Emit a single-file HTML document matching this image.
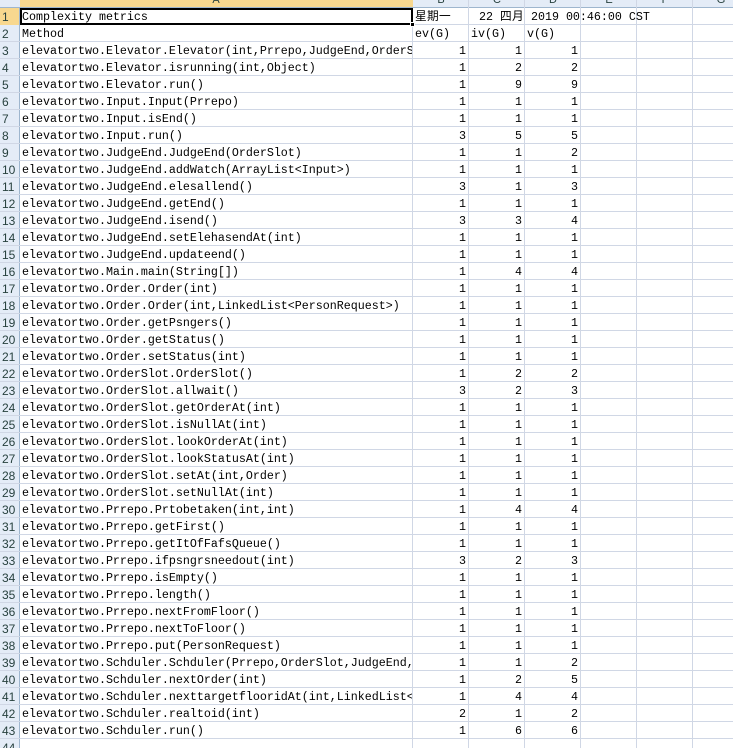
<!DOCTYPE html>
<html><head><meta charset="utf-8"><style>
*{margin:0;padding:0;box-sizing:border-box}
html,body{width:733px;height:748px;overflow:hidden}
body{background:#fff;position:relative;font-family:"Liberation Mono","Noto Sans CJK SC",monospace;font-size:11.67px;color:#000}
.h{position:absolute;left:0;width:733px;height:1px;background:#d0d7e5}
.v{position:absolute;top:0;width:1px;height:748px;background:#d0d7e5}
.rh{position:absolute;left:0;top:0;width:20px;height:748px;background:#e4ecf7;border-right:1px solid #9eb6ce}
.ch{position:absolute;left:0;top:0;width:733px;height:8px;background:#e4ecf7;border-bottom:1px solid #9eb6ce;overflow:hidden}
.cl{position:absolute;top:-6px;font-size:11px;color:#27413e;width:56px;text-align:center;font-family:"Liberation Sans",sans-serif}
.n{position:absolute;left:0;width:20px;height:17px;line-height:18px;padding-left:2px;color:#27413e;font-family:"Liberation Sans",sans-serif;font-size:12px}
.r{position:absolute;left:0;height:17px;line-height:18px;width:733px}
.a{position:absolute;left:22px;width:390px;overflow:hidden;white-space:nowrap}
.b,.c,.d{position:absolute;width:53px;text-align:right}
.b{left:413px}.c{left:469px}.d{left:525px}
.k{display:inline-block;width:12px;text-align:left}
</style></head><body>
<div class="rh"></div>
<div class="ch">
<div style="position:absolute;left:20px;top:0;width:393px;height:8px;background:#f8d88f"></div>
<div class="cl" style="left:188px">A</div>
<div class="cl" style="left:413px">B</div>
<div class="cl" style="left:469px">C</div>
<div class="cl" style="left:525px">D</div>
<div class="cl" style="left:581px">E</div>
<div class="cl" style="left:637px">F</div>
<div class="cl" style="left:693px">G</div>
</div>
<div class="v" style="left:412px;top:8px"></div>
<div class="v" style="left:468px"></div>
<div class="v" style="left:524px"></div>
<div class="v" style="left:580px"></div>
<div class="v" style="left:636px"></div>
<div class="v" style="left:692px"></div>
<div class="h" style="top:24px"></div><div class="h" style="top:41px"></div><div class="h" style="top:58px"></div><div class="h" style="top:75px"></div><div class="h" style="top:92px"></div><div class="h" style="top:109px"></div><div class="h" style="top:126px"></div><div class="h" style="top:143px"></div><div class="h" style="top:160px"></div><div class="h" style="top:177px"></div><div class="h" style="top:194px"></div><div class="h" style="top:211px"></div><div class="h" style="top:228px"></div><div class="h" style="top:245px"></div><div class="h" style="top:262px"></div><div class="h" style="top:279px"></div><div class="h" style="top:296px"></div><div class="h" style="top:313px"></div><div class="h" style="top:330px"></div><div class="h" style="top:347px"></div><div class="h" style="top:364px"></div><div class="h" style="top:381px"></div><div class="h" style="top:398px"></div><div class="h" style="top:415px"></div><div class="h" style="top:432px"></div><div class="h" style="top:449px"></div><div class="h" style="top:466px"></div><div class="h" style="top:483px"></div><div class="h" style="top:500px"></div><div class="h" style="top:517px"></div><div class="h" style="top:534px"></div><div class="h" style="top:551px"></div><div class="h" style="top:568px"></div><div class="h" style="top:585px"></div><div class="h" style="top:602px"></div><div class="h" style="top:619px"></div><div class="h" style="top:636px"></div><div class="h" style="top:653px"></div><div class="h" style="top:670px"></div><div class="h" style="top:687px"></div><div class="h" style="top:704px"></div><div class="h" style="top:721px"></div><div class="h" style="top:738px"></div>
<div style="position:absolute;left:20px;top:8px;width:393px;height:17px;border:2px solid #000"></div>
<div style="position:absolute;left:410px;top:22px;width:5px;height:5px;background:#000;border:1px solid #fff"></div>
<div style="position:absolute;left:0;top:8px;width:20px;height:17px;background:#f8d88f;border-right:1px solid #9eb6ce"></div>
<div class="n" style="top:8px">1</div><div class="n" style="top:25px">2</div><div class="n" style="top:42px">3</div><div class="n" style="top:59px">4</div><div class="n" style="top:76px">5</div><div class="n" style="top:93px">6</div><div class="n" style="top:110px">7</div><div class="n" style="top:127px">8</div><div class="n" style="top:144px">9</div><div class="n" style="top:161px">10</div><div class="n" style="top:178px">11</div><div class="n" style="top:195px">12</div><div class="n" style="top:212px">13</div><div class="n" style="top:229px">14</div><div class="n" style="top:246px">15</div><div class="n" style="top:263px">16</div><div class="n" style="top:280px">17</div><div class="n" style="top:297px">18</div><div class="n" style="top:314px">19</div><div class="n" style="top:331px">20</div><div class="n" style="top:348px">21</div><div class="n" style="top:365px">22</div><div class="n" style="top:382px">23</div><div class="n" style="top:399px">24</div><div class="n" style="top:416px">25</div><div class="n" style="top:433px">26</div><div class="n" style="top:450px">27</div><div class="n" style="top:467px">28</div><div class="n" style="top:484px">29</div><div class="n" style="top:501px">30</div><div class="n" style="top:518px">31</div><div class="n" style="top:535px">32</div><div class="n" style="top:552px">33</div><div class="n" style="top:569px">34</div><div class="n" style="top:586px">35</div><div class="n" style="top:603px">36</div><div class="n" style="top:620px">37</div><div class="n" style="top:637px">38</div><div class="n" style="top:654px">39</div><div class="n" style="top:671px">40</div><div class="n" style="top:688px">41</div><div class="n" style="top:705px">42</div><div class="n" style="top:722px">43</div><div class="n" style="top:739px">44</div>

<div class="r" style="top:8px"><span class="a">Complexity metrics</span><span style="position:absolute;left:415px;white-space:nowrap"><span class="k">星</span><span class="k">期</span><span class="k">一</span>&nbsp;&nbsp;&nbsp;&nbsp;22 <span class="k">四</span><span class="k">月</span> 2019 00:46:00 CST</span></div>
<div class="r" style="top:25px"><span class="a">Method</span><span style="position:absolute;left:415px">ev(G)</span><span style="position:absolute;left:471px">iv(G)</span><span style="position:absolute;left:527px">v(G)</span></div>
<div class="r" style="top:42px"><span class="a">elevatortwo.Elevator.Elevator(int,Prrepo,JudgeEnd,OrderSlot)</span><span class="b">1</span><span class="c">1</span><span class="d">1</span></div>
<div class="r" style="top:59px"><span class="a">elevatortwo.Elevator.isrunning(int,Object)</span><span class="b">1</span><span class="c">2</span><span class="d">2</span></div>
<div class="r" style="top:76px"><span class="a">elevatortwo.Elevator.run()</span><span class="b">1</span><span class="c">9</span><span class="d">9</span></div>
<div class="r" style="top:93px"><span class="a">elevatortwo.Input.Input(Prrepo)</span><span class="b">1</span><span class="c">1</span><span class="d">1</span></div>
<div class="r" style="top:110px"><span class="a">elevatortwo.Input.isEnd()</span><span class="b">1</span><span class="c">1</span><span class="d">1</span></div>
<div class="r" style="top:127px"><span class="a">elevatortwo.Input.run()</span><span class="b">3</span><span class="c">5</span><span class="d">5</span></div>
<div class="r" style="top:144px"><span class="a">elevatortwo.JudgeEnd.JudgeEnd(OrderSlot)</span><span class="b">1</span><span class="c">1</span><span class="d">2</span></div>
<div class="r" style="top:161px"><span class="a">elevatortwo.JudgeEnd.addWatch(ArrayList&lt;Input&gt;)</span><span class="b">1</span><span class="c">1</span><span class="d">1</span></div>
<div class="r" style="top:178px"><span class="a">elevatortwo.JudgeEnd.elesallend()</span><span class="b">3</span><span class="c">1</span><span class="d">3</span></div>
<div class="r" style="top:195px"><span class="a">elevatortwo.JudgeEnd.getEnd()</span><span class="b">1</span><span class="c">1</span><span class="d">1</span></div>
<div class="r" style="top:212px"><span class="a">elevatortwo.JudgeEnd.isend()</span><span class="b">3</span><span class="c">3</span><span class="d">4</span></div>
<div class="r" style="top:229px"><span class="a">elevatortwo.JudgeEnd.setElehasendAt(int)</span><span class="b">1</span><span class="c">1</span><span class="d">1</span></div>
<div class="r" style="top:246px"><span class="a">elevatortwo.JudgeEnd.updateend()</span><span class="b">1</span><span class="c">1</span><span class="d">1</span></div>
<div class="r" style="top:263px"><span class="a">elevatortwo.Main.main(String[])</span><span class="b">1</span><span class="c">4</span><span class="d">4</span></div>
<div class="r" style="top:280px"><span class="a">elevatortwo.Order.Order(int)</span><span class="b">1</span><span class="c">1</span><span class="d">1</span></div>
<div class="r" style="top:297px"><span class="a">elevatortwo.Order.Order(int,LinkedList&lt;PersonRequest&gt;)</span><span class="b">1</span><span class="c">1</span><span class="d">1</span></div>
<div class="r" style="top:314px"><span class="a">elevatortwo.Order.getPsngers()</span><span class="b">1</span><span class="c">1</span><span class="d">1</span></div>
<div class="r" style="top:331px"><span class="a">elevatortwo.Order.getStatus()</span><span class="b">1</span><span class="c">1</span><span class="d">1</span></div>
<div class="r" style="top:348px"><span class="a">elevatortwo.Order.setStatus(int)</span><span class="b">1</span><span class="c">1</span><span class="d">1</span></div>
<div class="r" style="top:365px"><span class="a">elevatortwo.OrderSlot.OrderSlot()</span><span class="b">1</span><span class="c">2</span><span class="d">2</span></div>
<div class="r" style="top:382px"><span class="a">elevatortwo.OrderSlot.allwait()</span><span class="b">3</span><span class="c">2</span><span class="d">3</span></div>
<div class="r" style="top:399px"><span class="a">elevatortwo.OrderSlot.getOrderAt(int)</span><span class="b">1</span><span class="c">1</span><span class="d">1</span></div>
<div class="r" style="top:416px"><span class="a">elevatortwo.OrderSlot.isNullAt(int)</span><span class="b">1</span><span class="c">1</span><span class="d">1</span></div>
<div class="r" style="top:433px"><span class="a">elevatortwo.OrderSlot.lookOrderAt(int)</span><span class="b">1</span><span class="c">1</span><span class="d">1</span></div>
<div class="r" style="top:450px"><span class="a">elevatortwo.OrderSlot.lookStatusAt(int)</span><span class="b">1</span><span class="c">1</span><span class="d">1</span></div>
<div class="r" style="top:467px"><span class="a">elevatortwo.OrderSlot.setAt(int,Order)</span><span class="b">1</span><span class="c">1</span><span class="d">1</span></div>
<div class="r" style="top:484px"><span class="a">elevatortwo.OrderSlot.setNullAt(int)</span><span class="b">1</span><span class="c">1</span><span class="d">1</span></div>
<div class="r" style="top:501px"><span class="a">elevatortwo.Prrepo.Prtobetaken(int,int)</span><span class="b">1</span><span class="c">4</span><span class="d">4</span></div>
<div class="r" style="top:518px"><span class="a">elevatortwo.Prrepo.getFirst()</span><span class="b">1</span><span class="c">1</span><span class="d">1</span></div>
<div class="r" style="top:535px"><span class="a">elevatortwo.Prrepo.getItOfFafsQueue()</span><span class="b">1</span><span class="c">1</span><span class="d">1</span></div>
<div class="r" style="top:552px"><span class="a">elevatortwo.Prrepo.ifpsngrsneedout(int)</span><span class="b">3</span><span class="c">2</span><span class="d">3</span></div>
<div class="r" style="top:569px"><span class="a">elevatortwo.Prrepo.isEmpty()</span><span class="b">1</span><span class="c">1</span><span class="d">1</span></div>
<div class="r" style="top:586px"><span class="a">elevatortwo.Prrepo.length()</span><span class="b">1</span><span class="c">1</span><span class="d">1</span></div>
<div class="r" style="top:603px"><span class="a">elevatortwo.Prrepo.nextFromFloor()</span><span class="b">1</span><span class="c">1</span><span class="d">1</span></div>
<div class="r" style="top:620px"><span class="a">elevatortwo.Prrepo.nextToFloor()</span><span class="b">1</span><span class="c">1</span><span class="d">1</span></div>
<div class="r" style="top:637px"><span class="a">elevatortwo.Prrepo.put(PersonRequest)</span><span class="b">1</span><span class="c">1</span><span class="d">1</span></div>
<div class="r" style="top:654px"><span class="a">elevatortwo.Schduler.Schduler(Prrepo,OrderSlot,JudgeEnd,int)</span><span class="b">1</span><span class="c">1</span><span class="d">2</span></div>
<div class="r" style="top:671px"><span class="a">elevatortwo.Schduler.nextOrder(int)</span><span class="b">1</span><span class="c">2</span><span class="d">5</span></div>
<div class="r" style="top:688px"><span class="a">elevatortwo.Schduler.nexttargetflooridAt(int,LinkedList&lt;Order&gt;)</span><span class="b">1</span><span class="c">4</span><span class="d">4</span></div>
<div class="r" style="top:705px"><span class="a">elevatortwo.Schduler.realtoid(int)</span><span class="b">2</span><span class="c">1</span><span class="d">2</span></div>
<div class="r" style="top:722px"><span class="a">elevatortwo.Schduler.run()</span><span class="b">1</span><span class="c">6</span><span class="d">6</span></div>
</body></html>
